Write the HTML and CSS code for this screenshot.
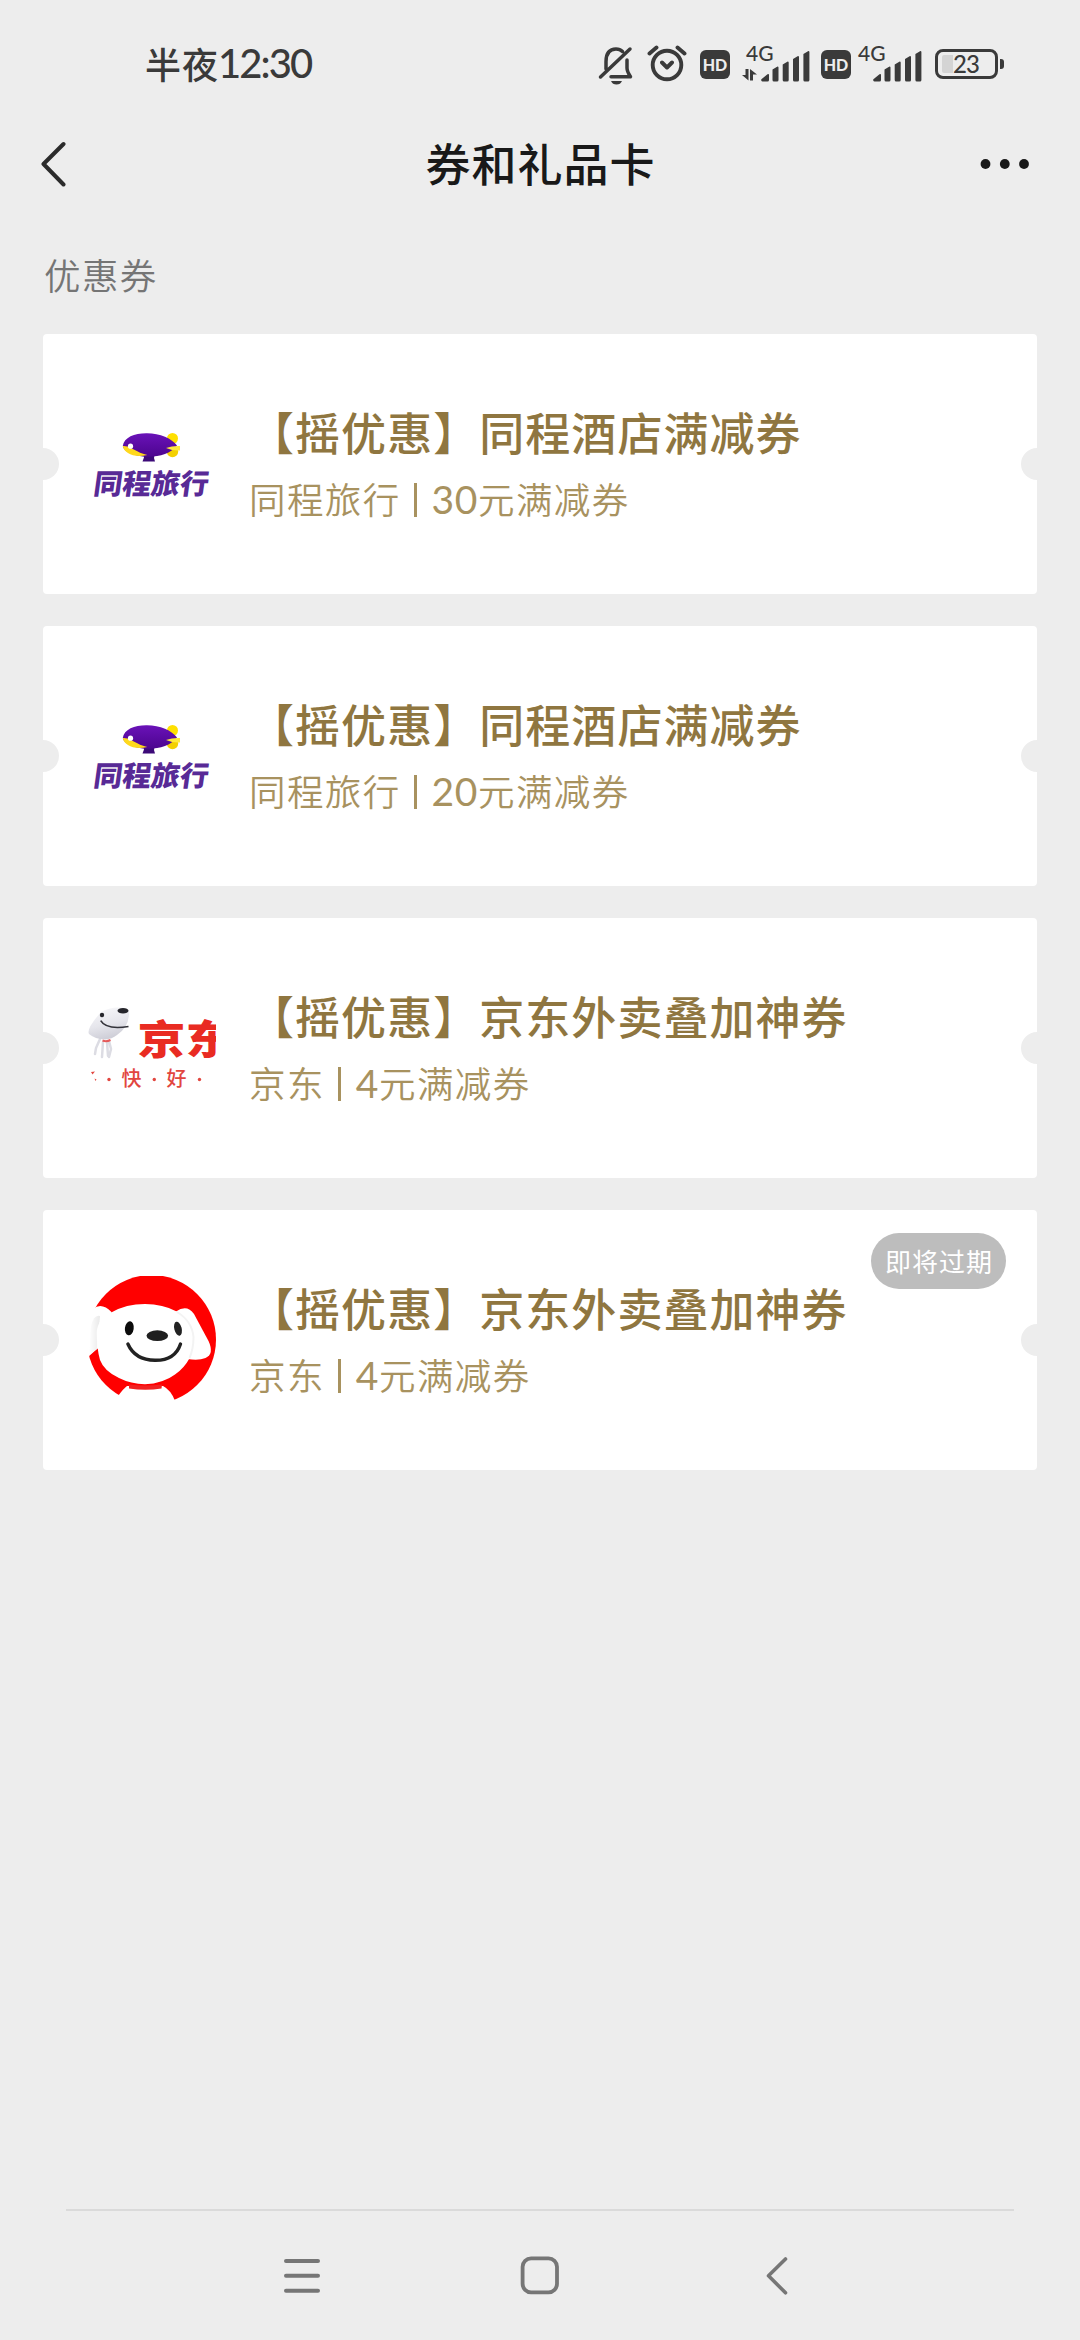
FILE: index.html
```html
<!DOCTYPE html>
<html lang="zh-CN">
<head>
<meta charset="utf-8">
<title>券和礼品卡</title>
<link rel="stylesheet" href="styles.css">
</head>
<body>
<svg class="defs" width="0" height="0" aria-hidden="true">
  <defs>
    <linearGradient id="dogShade" x1="0" y1="0" x2="0.3" y2="1"><stop offset="0" stop-color="#fafafc"/><stop offset="0.6" stop-color="#e6e6ec"/><stop offset="1" stop-color="#cfcfd8"/></linearGradient>
    <linearGradient id="earShade" x1="0" y1="0" x2="1" y2="0"><stop offset="0" stop-color="#fff"/><stop offset="1" stop-color="#e9e9e9"/></linearGradient>
    <linearGradient id="hull" x1="0" y1="0" x2="0" y2="1"><stop offset="0" stop-color="#6a12b8"/><stop offset="1" stop-color="#4c058f"/></linearGradient>
    <symbol id="bars" viewBox="0 0 49 32">
      <path d="M2 31.5a1.5 1.5 0 0 1-1-2.800l5.500-4.500q1.500-.7 1.500.7v5q0 1.600-1.500 1.600zM11.500 19.500l5-3q1 0 1 1v12.500q0 1.500-1.500 1.500h-3q-1.500 0-1.500-1.500zM21.700 14.500l5-3q1 0 1 1v17.500q0 1.500-1.500 1.500h-3q-1.500 0-1.500-1.500zM32 9l5-3q1 0 1 1v23q0 1.500-1.500 1.500h-3q-1.500 0-1.500-1.500zM42.400 4l5-3q1 0 1 1v28q0 1.500-1.500 1.500h-3q-1.500 0-1.500-1.500z"/>
    </symbol>
    <symbol id="tongcheng" viewBox="0 0 128 128">
      <circle cx="84.500" cy="38.500" r="5.500" fill="#ffe000"/>
      <circle cx="84.500" cy="51.500" r="5.700" fill="#f3d000"/>
      <path d="M55 53h12l-1 5 1 3.500H54.500l1.500-4z" fill="#3c0a78"/>
      <path d="M34.800 46C36 37 47 33 59 33.200c13 .1 25 5.300 30 12.300-6 8-17 11.300-29 11.200C46 56.500 36 52 34.800 46z" fill="url(#hull)"/>
      <path d="M34.800 46c5-.5 10 3 15 5.600 3 1.700 6 2.600 9.500 3.400C46 58.300 36 53 34.800 46z" fill="#ffd91c"/>
      <circle cx="42.500" cy="46.200" r="2.600" fill="#fff"/>
      <path d="M78 48q7-2.500 14-2v4.500q-7 .5-14-2.500z" fill="#ffe93c"/>
      <text class="tc-name" x="0" y="0" textLength="115" lengthAdjust="spacingAndGlyphs" transform="translate(4.500 93.500) skewX(-8)">同程旅行</text>
    </symbol>
  </defs>
</svg>

<div class="screen">
  <div class="statusbar">
    <div class="clock">半夜<span class="digits">12:30</span></div>
    <div class="status-icons">
      <svg class="bell" width="36" height="40" viewBox="0 0 36 40" fill="none" stroke="#3a3a3a" stroke-width="3.500" stroke-linecap="round" stroke-linejoin="round">
        <path d="M8 24V16.500Q8 4 18 4q4 0 6.500 2.500M29 15v8q0 3.500 3.500 8.700H13M32 4 2.500 32"/>
        <path d="M13 36h11q-1.500 3.500-5.500 3.500T13 36z" fill="#3a3a3a" stroke="none"/>
      </svg>
      <svg class="alarm" width="40" height="38" viewBox="0 0 40 38" fill="none" stroke="#3a3a3a" stroke-width="3.900" stroke-linecap="round" stroke-linejoin="round">
        <circle cx="20" cy="21" r="14.300"/><path d="m15 18.500 5 5 5-5M2.500 9.500 9.500 3.500M37.500 9.500 30.500 3.500"/>
      </svg>
      <span class="hd">HD</span>
      <div class="signal">
        <span class="net">4G</span>
        <svg class="traffic" width="15" height="12" viewBox="0 0 15 12" fill="#3a3a3a"><path d="M3.500 0H6.500V11.500L0 6H3.500zM8 0l7 5.500H11V11.500H8z"/></svg>
        <svg class="bars" width="49" height="32" fill="#3a3a3a"><use href="#bars"/></svg>
      </div>
      <span class="hd hd-second">HD</span>
      <div class="signal signal-second">
        <span class="net">4G</span>
        <svg class="bars" width="49" height="32" fill="#3a3a3a"><use href="#bars"/></svg>
      </div>
      <div class="battery"><span class="level"></span><span class="percent">23</span></div>
      <span class="nub"></span>
    </div>
  </div>

  <header class="header">
    <svg width="26" height="48" viewBox="0 0 26 48" fill="none" stroke="#2b2b2b" stroke-width="4" stroke-linecap="round" stroke-linejoin="round"><path d="M22.500 4 2.500 24l20 20.500"/></svg>
    <h1>券和礼品卡</h1>
    <svg width="52" height="12" viewBox="0 0 52 12" fill="#191919"><circle cx="6.500" cy="6" r="4.900"/><circle cx="25.800" cy="6" r="4.900"/><circle cx="45" cy="6" r="4.900"/></svg>
  </header>

  <main>
    <h2>优惠券</h2>
    <div class="coupons">
      <article class="coupon">
        <svg class="logo" width="128" height="128"><use href="#tongcheng"/></svg>
        <div class="info"><h3>【摇优惠】同程酒店满减券</h3><p>同程旅行<i></i><b>30</b>元满减券</p></div>
      </article>
      <article class="coupon">
        <svg class="logo" width="128" height="128"><use href="#tongcheng"/></svg>
        <div class="info"><h3>【摇优惠】同程酒店满减券</h3><p>同程旅行<i></i><b>20</b>元满减券</p></div>
      </article>
      <article class="coupon">
        <svg class="logo" width="128" height="128" viewBox="0 0 128 128">
          <path d="M12 55 8 64l-1 6M15 58l-1 15M19 58l1 14M21 57l2 8-2 8" stroke="#dcdce3" stroke-width="2.500" fill="none" stroke-linecap="round"/>
          <path d="M13 28Q24 22 36 24q5 .5 5 5 0 14-12 22-5 4-12 4.500Q7 55 1 50-2 45 13 28z" fill="url(#dogShade)"/>
          <path d="M14.500 56.500q4 1.500 8-.5" stroke="#e55a5a" stroke-width="2" fill="none"/>
          <ellipse cx="35" cy="26.700" rx="5.500" ry="2.800" fill="#26262c"/><circle cx="14" cy="31" r="2.200" fill="#26262c"/>
          <path d="M12.700 36.700Q18 46 40.500 42.500" stroke="#33333a" stroke-width="1.600" fill="none"/>
          <text class="jd-name" x="49.500" y="69.500" textLength="96" lengthAdjust="spacingAndGlyphs">京东</text>
          <g class="jd-slogan"><path d="m3 88 4-.5-2.500 3zM6.500 94.500l2 1-1 1.500z"/><text x="33.500" y="102">快</text><text x="78.500" y="102">好</text><circle cx="21" cy="95.500" r="1.700"/><circle cx="66.300" cy="95.500" r="1.700"/><circle cx="111.500" cy="95.500" r="1.700"/></g>
        </svg>
        <div class="info"><h3>【摇优惠】京东外卖叠加神券</h3><p>京东<i></i><b>4</b>元满减券</p></div>
      </article>
      <article class="coupon">
        <svg class="logo" width="128" height="128" viewBox="0 0 128 128">
          <circle cx="63.500" cy="63.500" r="64.500" fill="#f00"/>
          <path d="M5.300 32.500Q14 26 23.700 36.300L14 70 8.700 73.300 0 81-1 81V32z" fill="#fff"/>
          <path d="M3 50Q6 38 12 40L9 73 1 79z" fill="url(#earShade)"/>
          <path d="M88 35.500Q99 28 106 38l14.500 27q6 13-3 17-7 3-18 1z" fill="#fff"/>
          <path d="M26 128l4-8q6-8 9-10h36q8 4 12 15v4z" fill="#fff"/>
          <path d="M57 28Q75 28 88.700 35.500 105 45 106 62q0 11-4 19.500-6 11-15 17-12 9-30 9.800-14-.2-26-6.300Q16 95 12 84 8.700 72 8.700 57 9 43 23.700 36.300 38 28 57 28z" fill="#fff"/>
          <path d="M89 36q15 9 16.500 25 0 12-4 21" stroke="#f3f3f3" stroke-width="2" fill="none"/>
          <path d="M41 108.500q16 2 33 0l-.5 4q-16 2.500-32.500 0z" fill="#f12222"/>
          <ellipse cx="41.300" cy="52.300" rx="4.400" ry="7" transform="rotate(8 41.300 52.300)" fill="#0c0c0c"/>
          <ellipse cx="90" cy="52.700" rx="3.700" ry="7.200" transform="rotate(-14 90 52.700)" fill="#222"/>
          <ellipse cx="69.300" cy="59.700" rx="10.800" ry="5.400" fill="#1f1f1f"/>
          <path d="M39.900 68Q47 84 67 84.300T92.500 68" stroke="#222" stroke-width="3.400" stroke-linecap="round" fill="none"/>
        </svg>
        <div class="info"><h3>【摇优惠】京东外卖叠加神券</h3><p>京东<i></i><b>4</b>元满减券</p></div>
        <span class="badge">即将过期</span>
      </article>
    </div>
  </main>

  <nav class="navbar">
    <svg width="40" height="40" viewBox="0 0 40 40" stroke="#767676" stroke-width="4" stroke-linecap="round"><path d="M4 5h32M4 19.800h32M4 34.700h32"/></svg>
    <svg width="40" height="40" viewBox="0 0 40 40" fill="none" stroke="#767676" stroke-width="3.800"><rect x="2.600" y="2.300" width="34.400" height="34" rx="8.500"/></svg>
    <svg width="40" height="40" viewBox="0 0 40 40" fill="none" stroke="#767676" stroke-width="3.600" stroke-linecap="round" stroke-linejoin="round"><path d="M27.500 3 10.500 19.800l17 17"/></svg>
  </nav>
</div>
</body>
</html>
```

FILE: styles.css
```css
* { box-sizing: border-box; margin: 0; padding: 0; }
body { background: #ededed; font-family: "Noto Sans CJK SC", sans-serif; }
.defs { display: block; height: 0; }
svg { display: block; flex: none; }

.screen { width: 1080px; height: 2340px; display: flex; flex-direction: column; overflow: hidden; }

.statusbar { height: 128px; padding: 0 76px 0 145px; display: flex; justify-content: space-between; align-items: center; color: #3a3a3a; }
.clock { display: flex; font-size: 36px; font-weight: 500; line-height: 52px; letter-spacing: 1px; padding-bottom: 3px; }
.digits { font-family: Lato, sans-serif; font-size: 40px; font-weight: 500; letter-spacing: -1.900px; margin-left: -1px; }
.status-icons { display: flex; align-items: center; }
.bell { margin-right: 13px; margin-top: 1px; }
.alarm { margin-right: 13px; margin-top: -2px; }
.hd { width: 30px; height: 29px; border-radius: 6px; background: #3a3a3a; color: #ededed; font: 900 16px/29px Lato, sans-serif; text-align: center; }
.signal { width: 68px; height: 36px; margin-left: 12px; display: grid; grid-template-columns: 19px 49px; align-items: end; }
.signal svg { grid-row: 1; }
.signal .bars { grid-column: 2; }
.traffic { grid-column: 1; margin-bottom: 1px; }
.net { grid-row: 1; grid-column: 1; align-self: start; font: 500 21px/18px Lato, sans-serif; margin: -2px 0 0 4px; z-index: 1; }
.hd-second { margin-left: 11px; }
.signal-second { margin-left: 3px; }
.battery { width: 63px; height: 30px; margin-left: 13px; padding: 0 4px; border: 3.500px solid #3a3a3a; border-radius: 8px; display: flex; align-items: center; }
.level { width: 11px; height: 18px; background: #d4d4d4; border-radius: 2px 0 0 2px; }
.percent { font: 500 24px/24px Lato, sans-serif; letter-spacing: -1px; }
.nub { width: 4px; height: 10px; margin-left: 2px; background: #3a3a3a; border-radius: 0 3px 3px 0; }

.header { height: 72px; padding: 0 49px 0 41px; display: grid; grid-template-columns: 120px 1fr 120px; align-items: center; }
.header svg:last-child { justify-self: end; }
h1 { font-size: 45px; font-weight: 500; line-height: 66px; letter-spacing: 1px; text-align: center; color: #191919; padding: 0 0 2px 9px; }

main { flex: 1; padding: 50px 43px 0; }
h2 { height: 50px; font-size: 36.500px; font-weight: 350; line-height: 50px; letter-spacing: 1.400px; color: #757575; padding-left: 1px; }
.coupons { margin-top: 34px; display: flex; flex-direction: column; gap: 32px; }
.coupon { position: relative; height: 260px; padding-left: 45px; display: flex; align-items: center; gap: 33px; background: #fff; border-radius: 4px; }
.coupon::before, .coupon::after { content: ""; position: absolute; top: 114px; width: 16px; height: 32px; background: #ededed; }
.coupon::before { left: 0; border-radius: 0 16px 16px 0; }
.coupon::after { right: 0; border-radius: 16px 0 0 16px; }
.logo { overflow: hidden; }
.info { display: flex; flex-direction: column; gap: 12px; white-space: nowrap; padding-bottom: 3px; }
h3 { font-size: 45px; font-weight: 500; line-height: 60px; letter-spacing: 1.050px; color: #8f7640; }
p { display: flex; align-items: center; height: 50px; font-size: 36.500px; font-weight: 350; line-height: 50px; letter-spacing: 1.400px; color: #a8925f; }
p i { width: 3px; height: 34px; margin: 2px 15px 0 13px; background: #a8925f; }
p b { font: 400 39px/50px Lato, sans-serif; letter-spacing: 0.600px; }
.badge { position: absolute; top: 23px; right: 31px; width: 135px; height: 56px; border-radius: 28px; background: #bdbdbd; color: #fff; font-size: 26px; line-height: 55px; letter-spacing: 1px; text-align: center; padding-left: 1px; }

.tc-name { font: 900 28px "Noto Sans CJK SC", sans-serif; fill: #582a96; }
.jd-name { font: 900 40px "Noto Sans CJK SC", sans-serif; fill: #e92b22; }
.jd-slogan { font: 500 20px "Noto Sans CJK SC", sans-serif; fill: #e2463f; }

.navbar { height: 131px; margin: 0 66px; padding: 0 216px; border-top: 2px solid #dadada; display: flex; justify-content: space-between; align-items: center; }
```
